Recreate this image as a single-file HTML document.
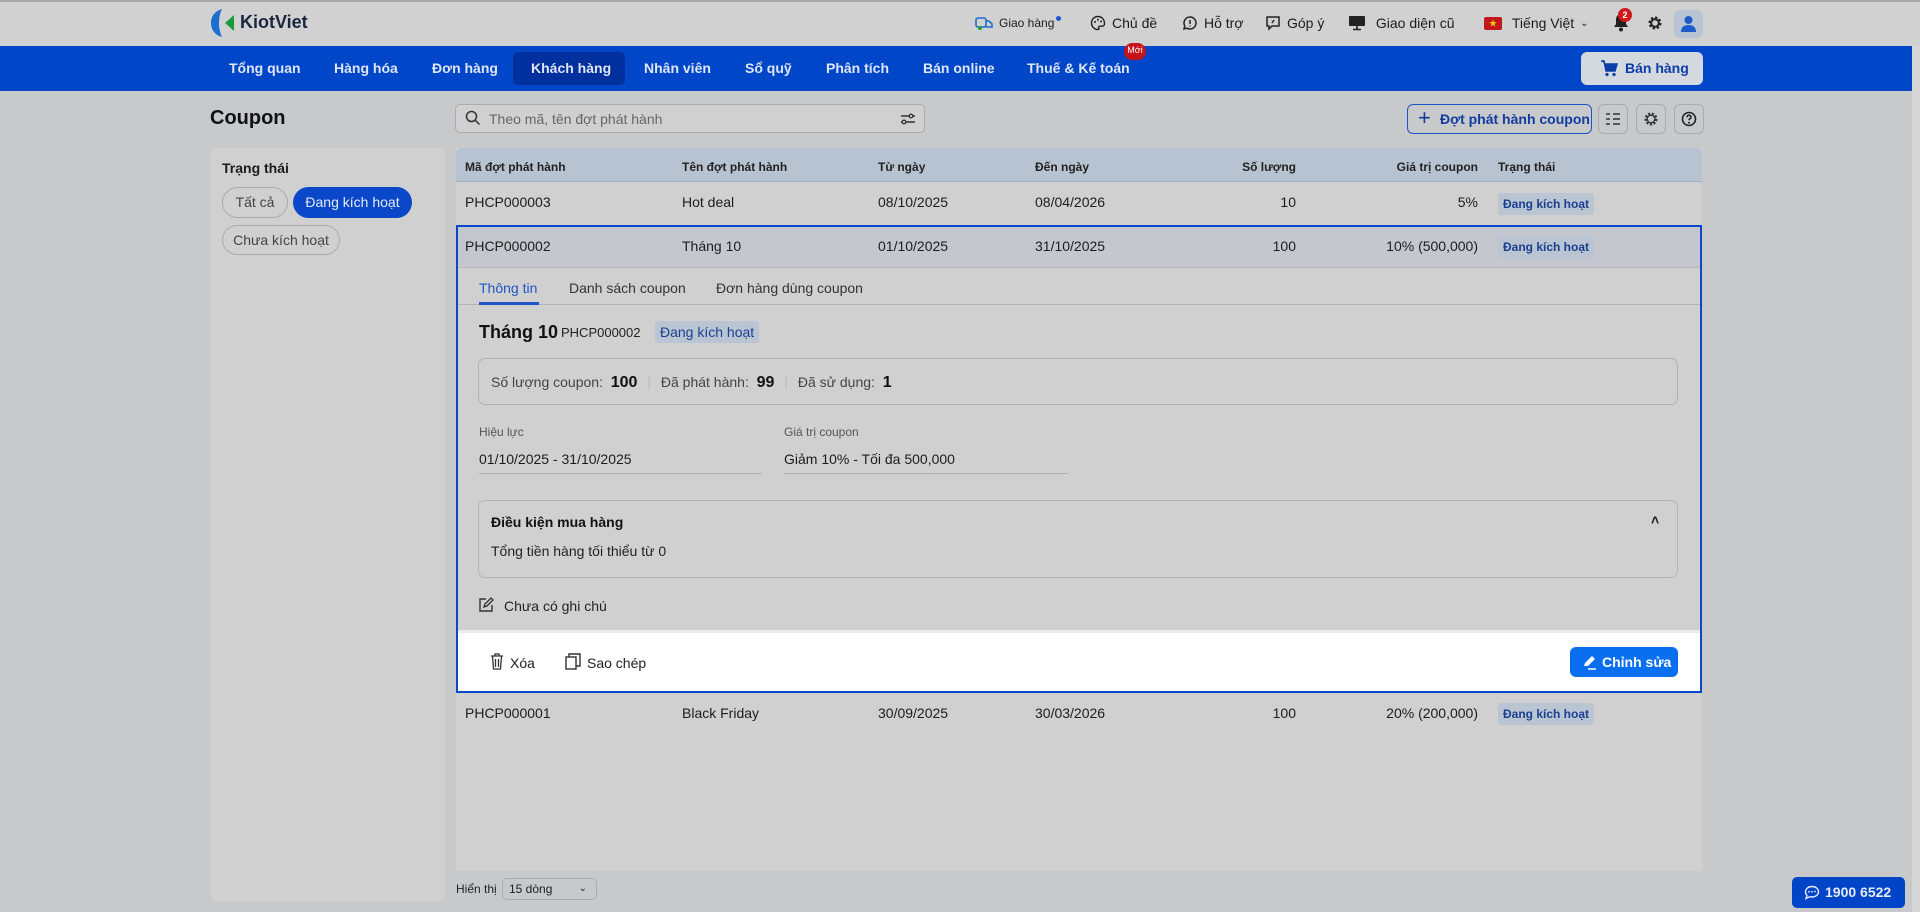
<!DOCTYPE html>
<html><head><meta charset="utf-8"><style>
*{box-sizing:border-box;margin:0;padding:0}
body{width:1920px;height:912px;overflow:hidden;background:#c8c9cb;font-family:"Liberation Sans","Noto Sans CJK SC",sans-serif;color:#1c1c1c;font-size:14px;position:relative}
.abs{position:absolute}
.top{left:0;top:0;width:1920px;height:46px;background:#d1d1d1;border-top:2px solid #a8a8a8}
.nav{left:0;top:46px;width:1912px;height:45px;background:#0046c8}
.nav span{position:absolute;top:14px;color:#dfe6f5;font-weight:bold;font-size:14px}
.tb{position:absolute;top:15px;font-size:14px;color:#1c1c1c;display:flex;align-items:center;gap:6px}
.panel{background:#d0d0d0}
.th{position:absolute;top:160px;font-size:12px;font-weight:bold;color:#222}
.td{position:absolute;font-size:14px;color:#1c1c1c}
.badge{position:absolute;background:#b9c5d3;color:#1b3f8f;font-size:12px;font-weight:bold;padding:4px 5px;border-radius:3px}
.r{text-align:right}
</style></head><body>
<div class="abs top"></div>
<!-- logo -->
<svg class="abs" style="left:210px;top:8px" width="28" height="30" viewBox="0 0 28 30"><path d="M12 1C5 3 1 8 1 15s4 12 11 14c-2-4-3-9-3-14s1-10 3-14z" fill="#1a6fd0"/><path d="M24 7l-9 8 9 8z" fill="#1a9a3a"/></svg>
<div class="abs" style="left:240px;top:12px;font-size:18px;font-weight:bold;color:#1b2540">KiotViet</div>
<!-- top right -->
<div class="tb" style="left:975px;font-size:12px"><svg width="18" height="16" viewBox="0 0 18 16"><rect x="1" y="3" width="10" height="9" rx="2" fill="none" stroke="#1f6bd0" stroke-width="1.6"/><path d="M11 6h3l3 3v3h-6" fill="none" stroke="#1f6bd0" stroke-width="1.6"/><circle cx="5" cy="13" r="2" fill="#1aa040"/></svg>Giao hàng<span style="width:5px;height:5px;background:#1f55d0;border-radius:50%;margin:-10px 0 0 -4px"></span></div>
<div class="tb" style="left:1090px"><svg width="16" height="16" viewBox="0 0 16 16"><path d="M8 1.5a6.5 6.5 0 100 13c1 0 1.3-.8.8-1.5-.6-.8 0-1.8 1-1.8H12a2.5 2.5 0 002.5-2.5C14.5 4.3 11.6 1.5 8 1.5z" fill="none" stroke="#222" stroke-width="1.4"/><circle cx="5" cy="7" r="1" fill="#222"/><circle cx="8" cy="4.8" r="1" fill="#222"/><circle cx="11" cy="6.5" r="1" fill="#222"/></svg>Chủ đề</div>
<div class="tb" style="left:1182px"><svg width="16" height="16" viewBox="0 0 16 16"><path d="M8 2a6 6 0 00-5.2 9L2 14l3-.8A6 6 0 108 2z" fill="none" stroke="#222" stroke-width="1.5"/><path d="M8 5v4M8 10.5v1" stroke="#222" stroke-width="1.5"/></svg>Hỗ trợ</div>
<div class="tb" style="left:1265px"><svg width="16" height="16" viewBox="0 0 16 16"><path d="M2 2h12v9H7l-3 3v-3H2z" fill="none" stroke="#222" stroke-width="1.5"/><path d="M9 5l-2 3" stroke="#222" stroke-width="1.5"/></svg>Góp ý</div>
<div class="tb" style="left:1348px"><svg width="18" height="16" viewBox="0 0 18 16"><rect x="1" y="1" width="16" height="10" rx="1" fill="#222"/><path d="M9 11v3M5 14.5h8" stroke="#222" stroke-width="1.6"/></svg>&nbsp;Giao diện cũ</div>
<div class="tb" style="left:1484px"><span style="width:18px;height:13px;background:#c2181d;border-radius:2px;color:#f5d000;font-size:8px;text-align:center;line-height:13px">★</span>&nbsp;Tiếng Việt <span style="font-size:10px">⌄</span></div>
<svg class="abs" style="left:1612px;top:12px" width="18" height="20" viewBox="0 0 18 20"><path d="M9 2a5 5 0 00-5 5v5l-2 3h14l-2-3V7a5 5 0 00-5-5z" fill="#222"/><circle cx="9" cy="17.5" r="2" fill="#222"/></svg>
<div class="abs" style="left:1618px;top:8px;width:14px;height:14px;border-radius:50%;background:#d0181b;color:#fff;font-size:9px;font-weight:bold;text-align:center;line-height:14px">2</div>
<svg class="abs" style="left:1647px;top:15px" width="16" height="16" viewBox="0 0 16 16"><circle cx="8" cy="8" r="5" fill="none" stroke="#222" stroke-width="3" stroke-dasharray="2.2 1.7"/><circle cx="8" cy="8" r="3.8" fill="none" stroke="#222" stroke-width="2"/></svg>
<div class="abs" style="left:1674px;top:10px;width:29px;height:28px;background:#b8c4d4;border-radius:6px"></div>
<svg class="abs" style="left:1680px;top:15px" width="17" height="18" viewBox="0 0 17 18"><circle cx="8.5" cy="5" r="4" fill="#1c5cc8"/><path d="M1 17c0-5 3-7 7.5-7s7.5 2 7.5 7z" fill="#1c5cc8"/></svg>
<!-- nav -->
<div class="abs nav">
<span style="left:229px">Tổng quan</span>
<span style="left:334px">Hàng hóa</span>
<span style="left:432px">Đơn hàng</span>
<div style="position:absolute;left:513px;top:6px;width:112px;height:33px;background:#00309e;border-radius:5px"></div>
<span style="left:531px">Khách hàng</span>
<span style="left:644px">Nhân viên</span>
<span style="left:745px">Sổ quỹ</span>
<span style="left:826px">Phân tích</span>
<span style="left:923px">Bán online</span>
<span style="left:1027px">Thuế &amp; Kế toán</span>
<div style="position:absolute;left:1124px;top:-3px;width:22px;height:17px;border-radius:9px;background:#c8121a;color:#fff;font-size:9px;text-align:center;line-height:15px">Mới</div>
<div style="position:absolute;left:1581px;top:6px;width:122px;height:33px;background:#d4d8df;border-radius:6px;color:#0b3ea8;font-weight:bold;font-size:14px;line-height:33px;padding-left:44px">Bán hàng</div>
<svg style="position:absolute;left:1600px;top:14px" width="18" height="17" viewBox="0 0 18 17"><path d="M1 1h3l2 10h9l2-7H5" fill="#0b3ea8" stroke="#0b3ea8" stroke-width="1.5"/><circle cx="7" cy="14.5" r="1.6" fill="#0b3ea8"/><circle cx="14" cy="14.5" r="1.6" fill="#0b3ea8"/></svg>
</div>
<div class="abs" style="left:1912px;top:46px;width:8px;height:866px;background:#d6d6d6"></div>
<!-- title & search -->
<div class="abs" style="left:210px;top:107px;font-size:20px;font-weight:bold;color:#111">Coupon</div>
<div class="abs" style="left:455px;top:104px;width:470px;height:29px;border:1px solid #a9abae;border-radius:5px;background:#d0d0d0"></div>
<svg class="abs" style="left:465px;top:110px" width="16" height="16" viewBox="0 0 16 16"><circle cx="6.5" cy="6.5" r="5" fill="none" stroke="#333" stroke-width="1.5"/><path d="M10.5 10.5l4 4" stroke="#333" stroke-width="1.5"/></svg>
<div class="abs" style="left:489px;top:111px;font-size:14px;color:#666">Theo mã, tên đợt phát hành</div>
<svg class="abs" style="left:900px;top:111px" width="16" height="16" viewBox="0 0 16 16"><path d="M1 5h9M1 11h14M12 5h3" stroke="#333" stroke-width="1.4"/><circle cx="11" cy="5" r="1.8" fill="none" stroke="#333" stroke-width="1.3"/><circle cx="4" cy="11" r="1.8" fill="#d0d0d0" stroke="#333" stroke-width="1.3"/></svg>
<div class="abs" style="left:1407px;top:104px;width:185px;height:30px;border:1px solid #1f55c8;border-radius:6px;color:#123c9e;font-weight:bold;font-size:14px;line-height:28px;padding-left:32px">Đợt phát hành coupon</div>
<div class="abs" style="left:1418px;top:106px;font-size:22px;color:#123c9e;line-height:24px">+</div>
<div class="abs" style="left:1598px;top:104px;width:30px;height:30px;border:1px solid #a9abae;border-radius:6px"></div>
<svg class="abs" style="left:1605px;top:112px" width="16" height="14" viewBox="0 0 16 14"><path d="M1 2h4M1 7h4M1 12h4M8 2h7M8 7h7M8 12h7" stroke="#333" stroke-width="1.5"/></svg>
<div class="abs" style="left:1636px;top:104px;width:30px;height:30px;border:1px solid #a9abae;border-radius:6px"></div>
<svg class="abs" style="left:1643px;top:111px" width="16" height="16" viewBox="0 0 16 16"><circle cx="8" cy="8" r="5.2" fill="none" stroke="#333" stroke-width="2.6" stroke-dasharray="2 1.6"/><circle cx="8" cy="8" r="3.8" fill="none" stroke="#333" stroke-width="1.4"/></svg>
<div class="abs" style="left:1674px;top:104px;width:30px;height:30px;border:1px solid #a9abae;border-radius:6px"></div>
<svg class="abs" style="left:1681px;top:111px" width="16" height="16" viewBox="0 0 16 16"><circle cx="8" cy="8" r="6.5" fill="none" stroke="#222" stroke-width="1.6"/><path d="M6 6.2a2 2 0 114 0c0 1.4-2 1.5-2 3" fill="none" stroke="#222" stroke-width="1.6"/><circle cx="8" cy="11.8" r="1" fill="#222"/></svg>
<!-- sidebar -->
<div class="abs panel" style="left:210px;top:148px;width:235px;height:754px;border-radius:8px"></div>
<div class="abs" style="left:222px;top:160px;font-size:14px;font-weight:bold;color:#1c1c1c">Trạng thái</div>
<div class="abs" style="left:222px;top:187px;width:66px;height:31px;border:1px solid #a9abae;border-radius:16px;font-size:14px;color:#444;line-height:29px;text-align:center">Tất cả</div>
<div class="abs" style="left:293px;top:187px;width:119px;height:31px;background:#0a47c9;border-radius:16px;font-size:14px;color:#e6ecf8;line-height:31px;text-align:center">Đang kích hoạt</div>
<div class="abs" style="left:222px;top:225px;width:118px;height:30px;border:1px solid #a9abae;border-radius:16px;font-size:14px;color:#444;line-height:28px;text-align:center">Chưa kích hoạt</div>
<!-- table -->
<div class="abs panel" style="left:456px;top:148px;width:1246px;height:723px"></div>
<div class="abs" style="left:456px;top:148px;width:1246px;height:34px;background:#b7c3d0;border-radius:6px 6px 0 0;border-bottom:1px solid #9fb0c6"></div>
<div class="th" style="left:465px">Mã đợt phát hành</div>
<div class="th" style="left:682px">Tên đợt phát hành</div>
<div class="th" style="left:878px">Từ ngày</div>
<div class="th" style="left:1035px">Đến ngày</div>
<div class="th r" style="left:1196px;width:100px">Số lượng</div>
<div class="th r" style="left:1378px;width:100px">Giá trị coupon</div>
<div class="th" style="left:1498px">Trạng thái</div>
<!-- row1 -->
<div class="td" style="left:465px;top:194px">PHCP000003</div>
<div class="td" style="left:682px;top:194px">Hot deal</div>
<div class="td" style="left:878px;top:194px">08/10/2025</div>
<div class="td" style="left:1035px;top:194px">08/04/2026</div>
<div class="td r" style="left:1196px;top:194px;width:100px">10</div>
<div class="td r" style="left:1378px;top:194px;width:100px">5%</div>
<div class="badge" style="left:1498px;top:193px">Đang kích hoạt</div>
<!-- expanded -->
<div class="abs" style="left:456px;top:225px;width:1246px;height:468px;border:2px solid #0a47c9;background:#d0d0d0"></div>
<div class="abs" style="left:458px;top:227px;width:1242px;height:41px;background:#c4c8ce;border-bottom:1px solid #b8b8b8"></div>
<div class="td" style="left:465px;top:238px">PHCP000002</div>
<div class="td" style="left:682px;top:238px">Tháng 10</div>
<div class="td" style="left:878px;top:238px">01/10/2025</div>
<div class="td" style="left:1035px;top:238px">31/10/2025</div>
<div class="td r" style="left:1196px;top:238px;width:100px">100</div>
<div class="td r" style="left:1378px;top:238px;width:100px">10% (500,000)</div>
<div class="badge" style="left:1498px;top:236px">Đang kích hoạt</div>
<div class="abs" style="left:458px;top:304px;width:1242px;height:1px;background:#b4b4b4"></div>
<div class="td" style="left:479px;top:280px;color:#1f55c8">Thông tin</div>
<div class="abs" style="left:479px;top:302px;width:60px;height:3px;background:#1f55c8"></div>
<div class="td" style="left:569px;top:280px;color:#333">Danh sách coupon</div>
<div class="td" style="left:716px;top:280px;color:#333">Đơn hàng dùng coupon</div>
<div class="abs" style="left:479px;top:322px;font-size:18px;font-weight:bold;color:#111">Tháng 10</div>
<div class="abs" style="left:561px;top:325px;font-size:13px;color:#222">PHCP000002</div>
<div class="abs" style="left:655px;top:321px;background:#b9c5d3;color:#1b3f8f;font-size:14px;padding:3px 5px;border-radius:3px">Đang kích hoạt</div>
<div class="abs" style="left:478px;top:358px;width:1200px;height:47px;border:1px solid #b1b1b1;border-radius:7px"></div>
<div class="abs" style="left:491px;top:374px;font-size:14px;color:#444">Số lượng coupon:&nbsp; <b style="color:#111;font-size:16px">100</b> <span style="color:#bbb;margin:0 6px">|</span> Đã phát hành:&nbsp; <b style="color:#111;font-size:16px">99</b> <span style="color:#bbb;margin:0 6px">|</span> Đã sử dụng:&nbsp; <b style="color:#111;font-size:16px">1</b></div>
<div class="abs" style="left:479px;top:425px;font-size:12px;color:#555">Hiệu lực</div>
<div class="td" style="left:479px;top:451px">01/10/2025 - 31/10/2025</div>
<div class="abs" style="left:479px;top:473px;width:283px;height:1px;background:#b0b0b0"></div>
<div class="abs" style="left:784px;top:425px;font-size:12px;color:#555">Giá trị coupon</div>
<div class="td" style="left:784px;top:451px">Giảm 10% - Tối đa 500,000</div>
<div class="abs" style="left:784px;top:473px;width:284px;height:1px;background:#b0b0b0"></div>
<div class="abs" style="left:478px;top:500px;width:1200px;height:78px;border:1px solid #b4b4b4;border-radius:7px"></div>
<div class="abs" style="left:491px;top:514px;font-size:14px;font-weight:bold;color:#111">Điều kiện mua hàng</div>
<div class="abs" style="left:1651px;top:512px;font-size:14px;font-weight:bold">˄</div>
<div class="td" style="left:491px;top:543px;color:#222">Tổng tiền hàng tối thiểu từ 0</div>
<svg class="abs" style="left:478px;top:597px" width="16" height="16" viewBox="0 0 16 16"><path d="M8 2H2v12h12V8" fill="none" stroke="#333" stroke-width="1.4"/><path d="M6 10l1-3 6-6 2 2-6 6z" fill="none" stroke="#333" stroke-width="1.3"/></svg>
<div class="td" style="left:504px;top:598px;color:#222">Chưa có ghi chú</div>
<div class="abs" style="left:458px;top:630px;width:1242px;height:61px;background:#fff;border-top:3px solid #eaeaea"></div>
<svg class="abs" style="left:490px;top:653px" width="14" height="17" viewBox="0 0 14 17"><path d="M1 3h12M5 3V1h4v2M2.5 3l1 13h7l1-13M5.5 6v8M8.5 6v8" fill="none" stroke="#333" stroke-width="1.3"/></svg>
<div class="td" style="left:510px;top:655px;color:#222">Xóa</div>
<svg class="abs" style="left:565px;top:653px" width="16" height="17" viewBox="0 0 16 17"><rect x="1" y="4" width="10" height="12" fill="none" stroke="#333" stroke-width="1.4"/><path d="M4 4V1h11v12h-4" fill="none" stroke="#333" stroke-width="1.4"/></svg>
<div class="td" style="left:587px;top:655px;color:#222">Sao chép</div>
<div class="abs" style="left:1570px;top:647px;width:108px;height:30px;background:#0a6ef0;border-radius:6px;color:#fff;font-weight:bold;font-size:14px;line-height:30px;padding-left:32px">Chỉnh sửa</div>
<svg class="abs" style="left:1582px;top:654px" width="16" height="16" viewBox="0 0 16 16"><path d="M2 12l1-3 7-7 3 3-7 7z" fill="#fff"/><path d="M6 15h8" stroke="#fff" stroke-width="1.5"/></svg>
<!-- row3 -->
<div class="td" style="left:465px;top:705px">PHCP000001</div>
<div class="td" style="left:682px;top:705px">Black Friday</div>
<div class="td" style="left:878px;top:705px">30/09/2025</div>
<div class="td" style="left:1035px;top:705px">30/03/2026</div>
<div class="td r" style="left:1196px;top:705px;width:100px">100</div>
<div class="td r" style="left:1378px;top:705px;width:100px">20% (200,000)</div>
<div class="badge" style="left:1498px;top:703px">Đang kích hoạt</div>
<!-- footer -->
<div class="abs" style="left:456px;top:882px;font-size:12px;color:#222">Hiển thị</div>
<div class="abs" style="left:502px;top:878px;width:95px;height:22px;border:1px solid #a9abae;border-radius:5px;font-size:12px;color:#222;line-height:20px;padding-left:6px">15 dòng<span style="position:absolute;right:9px;top:0;font-size:10px">⌄</span></div>
<div class="abs" style="left:1792px;top:877px;width:113px;height:31px;background:#0044c8;border-radius:5px;color:#e6ecf8;font-weight:bold;font-size:14px;line-height:31px;padding-left:33px">1900 6522</div>
<svg class="abs" style="left:1804px;top:885px" width="16" height="15" viewBox="0 0 16 15"><path d="M8 1.5c3.6 0 6.5 2.3 6.5 5.2S11.6 12 8 12c-.8 0-1.5-.1-2.2-.3L2 13.5l1-3C2 9.5 1.5 8.2 1.5 6.7 1.5 3.8 4.4 1.5 8 1.5z" fill="none" stroke="#e6ecf8" stroke-width="1.4"/><circle cx="5" cy="6.8" r=".9" fill="#e6ecf8"/><circle cx="8" cy="6.8" r=".9" fill="#e6ecf8"/><circle cx="11" cy="6.5" r=".9" fill="#e6ecf8"/></svg>
</body></html>
